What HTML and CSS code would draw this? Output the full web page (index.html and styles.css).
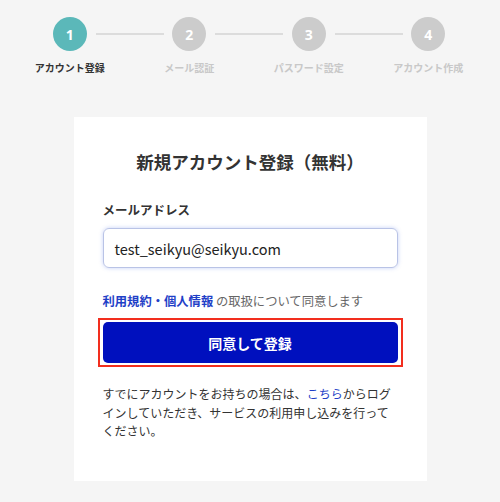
FILE: index.html
```html
<!DOCTYPE html>
<html lang="ja">
<head>
<meta charset="utf-8">
<link rel="stylesheet" href="styles.css">
</head>
<body>
<div class="stepper">
  <div class="step active"><div class="num">1</div><div class="label">アカウント登録</div></div>
  <div class="step"><div class="num">2</div><div class="label">メール認証</div></div>
  <div class="step"><div class="num">3</div><div class="label">パスワード設定</div></div>
  <div class="step last"><div class="num">4</div><div class="label">アカウント作成</div></div>
</div>
<div class="card">
  <h1 class="title">新規アカウント登録（無料）</h1>
  <div class="field-label">メールアドレス</div>
  <div class="input">test_seikyu@seikyu.com</div>
  <p class="terms"><span class="link bold">利用規約・個人情報</span> の取扱について同意します</p>
  <div class="btn-wrap"><div class="btn">同意して登録</div></div>
  <p class="note">すでにアカウントをお持ちの場合は、<span class="link">こちら</span>からログインしていただき、サービスの利用申し込みを行ってください。</p>
</div>
</body>
</html>
```
FILE: styles.css
```css
* { box-sizing: border-box; }
body {
  margin: 0;
  background: #f5f5f5;
  font-family: "Noto Sans CJK JP", "Noto Sans", sans-serif;
  color: #333;
}
.stepper {
  display: grid;
  grid-template-columns: repeat(4, 119.5px);
  padding: 17px 0 0 10px;
}
.step {
  position: relative;
  display: flex;
  flex-direction: column;
  align-items: center;
}
.step::after {
  content: "";
  position: absolute;
  top: 16px;
  left: calc(50% + 26px);
  width: 68px;
  height: 2px;
  background: #dcdcdc;
}
.step.last::after { display: none; }
.num {
  width: 34px;
  height: 34px;
  border-radius: 50%;
  background: #cccccc;
  color: #fff;
  font-family: "Open Sans", sans-serif;
  font-weight: 700;
  font-size: 14px;
  display: flex;
  align-items: center;
  justify-content: center;
}
.step.active .num { background: #5bb8b9; }
.label {
  margin-top: 9px;
  font-size: 10px;
  font-weight: 700;
  line-height: 16px;
  color: #c8c8c8;
  white-space: nowrap;
}
.step.active .label { color: #333; }
.card {
  width: 353px;
  margin: 41px auto 0;
  background: #fff;
  padding: 32px 29px 40px;
}
.title {
  margin: 0;
  text-align: center;
  font-size: 17.5px;
  line-height: 26px;
  font-weight: 700;
  color: #333;
}
.field-label {
  margin-top: 26px;
  font-size: 12.5px;
  font-weight: 700;
  line-height: 18px;
}
.input {
  margin-top: 9px;
  height: 40px;
  border: 1px solid #b9c3e6;
  border-radius: 6px;
  box-shadow: 0 0 4px rgba(90, 120, 230, 0.35);
  padding: 0 11px;
  display: flex;
  align-items: center;
  font-size: 14.5px;
  color: #222;
}
.terms {
  margin: 24px 0 0;
  font-size: 12.3px;
  line-height: 18px;
  color: #666;
}
.link { color: #1f3fc7; }
.bold { font-weight: 700; }
.btn-wrap {
  margin: 8px -5px 0;
  border: 2px solid #f22e1e;
  padding: 2px 3px;
}
.btn {
  height: 41px;
  border-radius: 5px;
  background: #0010be;
  color: #fff;
  font-weight: 700;
  font-size: 14px;
  display: flex;
  align-items: center;
  justify-content: center;
}
.note {
  margin: 18px 0 0;
  font-size: 12px;
  line-height: 18.5px;
  color: #333;
}
```
